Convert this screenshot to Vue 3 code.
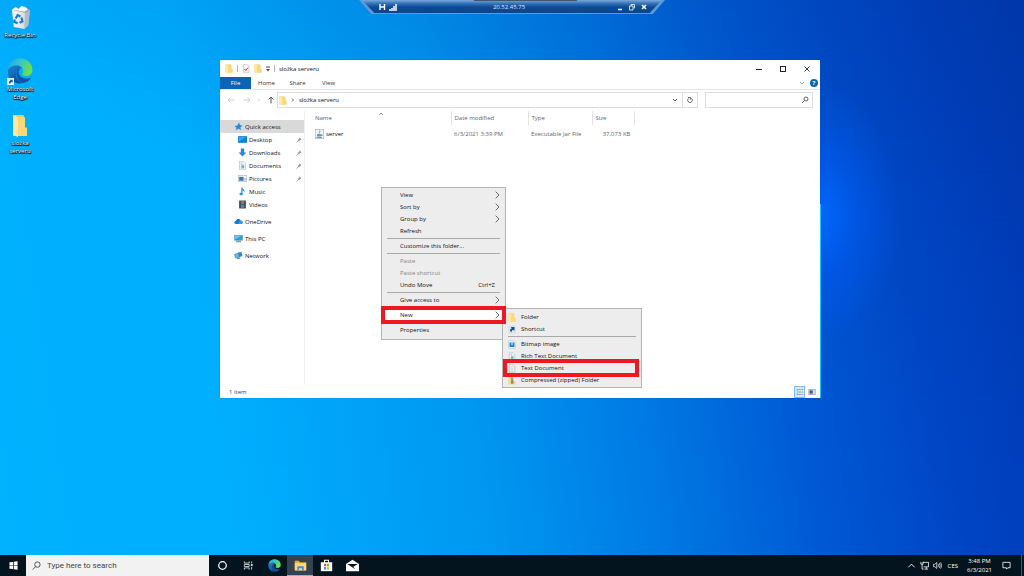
<script setup>
const desktopIcons = [
  { icon: 'bin', label: 'Recycle Bin' },
  { icon: 'edge', label: 'Microsoft Edge', shortcut: true },
  { icon: 'folder', label: 'složka serveru' }
]

const tabs = ['File', 'Home', 'Share', 'View']

const places = [
  { icon: 'star', label: 'Quick access', root: true, active: true },
  { icon: 'desktop', label: 'Desktop', pinned: true },
  { icon: 'download', label: 'Downloads', pinned: true },
  { icon: 'document', label: 'Documents', pinned: true },
  { icon: 'picture', label: 'Pictures', pinned: true },
  { icon: 'music', label: 'Music' },
  { icon: 'video', label: 'Videos' },
  { icon: 'cloud', label: 'OneDrive', root: true },
  { icon: 'pc', label: 'This PC', root: true },
  { icon: 'network', label: 'Network', root: true }
]

const menu = [
  { label: 'View', arrow: true },
  { label: 'Sort by', arrow: true },
  { label: 'Group by', arrow: true },
  { label: 'Refresh' },
  { sep: true },
  { label: 'Customize this folder...' },
  { sep: true },
  { label: 'Paste', disabled: true },
  { label: 'Paste shortcut', disabled: true },
  { label: 'Undo Move', keys: 'Ctrl+Z' },
  { sep: true },
  { label: 'Give access to', arrow: true },
  { sep: true },
  { label: 'New', arrow: true, open: true },
  { sep: true },
  { label: 'Properties' }
]

const newItems = [
  { label: 'Folder', icon: 'folder' },
  { label: 'Shortcut', icon: 'shortcut' },
  { sep: true },
  { label: 'Bitmap image', icon: 'bitmap' },
  { label: 'Rich Text Document', icon: 'document' },
  { label: 'Text Document', icon: 'text', marked: true },
  { label: 'Compressed (zipped) Folder', icon: 'zip' }
]

const apps = [
  { icon: 'cortana', label: 'Cortana' },
  { icon: 'taskview', label: 'Task View' },
  { icon: 'edge', label: 'Microsoft Edge' },
  { icon: 'explorer', label: 'File Explorer', active: true },
  { icon: 'store', label: 'Microsoft Store' },
  { icon: 'mail', label: 'Mail' }
]
</script>

<template>
  <svg class="sprite" aria-hidden="true">
    <defs>
      <linearGradient id="edge-top" x1="0" y1="0" x2="1" y2="0.3">
        <stop offset="0" stop-color="#2aa5dc" />
        <stop offset="0.5" stop-color="#33c3cf" />
        <stop offset="1" stop-color="#6be04a" />
      </linearGradient>
      <linearGradient id="edge-low" x1="0" y1="0" x2="0.6" y2="1">
        <stop offset="0" stop-color="#1b86d8" />
        <stop offset="1" stop-color="#0c4a9c" />
      </linearGradient>
      <linearGradient id="bin-side" x1="0" y1="0" x2="1" y2="0">
        <stop offset="0" stop-color="#f4f6f8" />
        <stop offset="0.6" stop-color="#dfe3e7" />
        <stop offset="1" stop-color="#aab2ba" />
      </linearGradient>
    </defs>
    <symbol id="bin" viewBox="0 0 24 24">
      <path d="M3 4 L5 22 L16 24 L20 20 L22 4 Z" fill="url(#bin-side)" />
      <path d="M16 24 L20 20 L22 4 L17 6 Z" fill="#b5bcc4" />
      <path d="M3 4 L8 2 L12 1 L17 1 L22 4 L17 7 Z" fill="#8f989f" />
      <path d="M3 4 L7 1 L10 3 L13 0 L17 1 L20 4 L16 6 L10 5 Z" fill="#f7f9fa" />
      <path d="M7 13 L9 9.500 L12 11 M13 12 L14 16 L11 17.500 M9 18 L5.500 16.500 L6 14" fill="none" stroke="#1479d2" stroke-width="2.200" />
    </symbol>
    <symbol id="edge" viewBox="0 0 26 26">
      <path d="M1 12 C1 5 6.500 0.500 13 0.500 C20.500 0.500 25.500 6 25.500 12 C25.500 16 22.500 18 19 18 C15.500 18 14.500 16.500 15.500 15 C17.500 12 15 7.500 10 7.500 C5.500 7.500 2 10 1 12 Z" fill="url(#edge-top)" />
      <path d="M1 12 C2 9 6 7.500 9.500 7.500 C12.500 7.500 14.500 9 15 10.500 C12 9.500 9 12 9 16 C9 20.500 12 24.500 16 25 C7 27 0 21 1 12 Z" fill="url(#edge-low)" />
      <path d="M9.500 14 C8.500 19 12 24.500 16 25 C20 24.500 23 22 24.500 19.500 C21.500 21.500 12 21.500 11.500 14 C11.500 12.500 12.500 11 14 10.500 C11.500 10 10 12 9.500 14 Z" fill="#15529f" />
    </symbol>
    <symbol id="folder" viewBox="0 0 16 22" preserveAspectRatio="none">
      <path d="M1 1 H11 L12 2 V13 H15 V21 H1 Z" fill="#f2c95c" />
      <path d="M1 1 L6 3 V22 L1 20 Z" fill="#ffe9a6" />
      <path d="M6 3 H13 V13 L15 14 V21 H6 Z" fill="#fbd978" />
    </symbol>
    <symbol id="check" viewBox="0 0 16 16">
      <path d="M2.500 0.500 H11 L14 3.500 V15.500 H2.500 Z" fill="#fff" stroke="#999" />
      <path d="M5 9 L7.500 12 L12 6" fill="none" stroke="#d5333e" stroke-width="2" />
    </symbol>
    <symbol id="star" viewBox="0 0 16 16">
      <path d="M9 1 L10.500 5.500 L15 6.500 L11.500 9.500 L12 14.500 L8 11.500 L3 15 L4.500 10 L1 7 L6 6 Z" fill="#2389dc" />
    </symbol>
    <symbol id="desktop" viewBox="0 0 16 16">
      <rect y="2" width="16" height="12" fill="#0f83d8" />
      <path d="M1 3 H15 L1 12 Z" fill="#2fa6f0" />
    </symbol>
    <symbol id="download" viewBox="0 0 16 16">
      <path d="M5 1 H11 V8 H15 L8 15 L1 8 H5 Z" fill="#3285cf" />
    </symbol>
    <symbol id="document" viewBox="0 0 16 16">
      <path d="M2.500 0.500 H10 L13.500 4 V15.500 H2.500 Z" fill="#f5f9fb" stroke="#9badb8" />
      <path d="M5 4 H8 M5 7 H11 M5 12.500 H11" stroke="#6d9cba" />
      <rect x="6" y="8" width="5" height="4" fill="#62a8d5" />
    </symbol>
    <symbol id="picture" viewBox="0 0 16 16">
      <rect x="0.500" y="2.500" width="15" height="11" fill="#fff" stroke="#9aaab4" />
      <path d="M2 5 H10 V12 H2 Z" fill="#3e79a9" />
      <path d="M10 7 H14 V12 H10 Z" fill="#a6cee8" />
    </symbol>
    <symbol id="music" viewBox="0 0 16 16">
      <path d="M7 1 V12" stroke="#1683d8" stroke-width="2" />
      <path d="M8 1 C8 4 13 5 11 10 C11 7 9 6 8 6 Z" fill="#1683d8" />
      <ellipse cx="5.500" cy="12.500" rx="3" ry="2.500" fill="#2593e2" />
    </symbol>
    <symbol id="video" viewBox="0 0 16 16">
      <rect x="2" y="1" width="12" height="14" fill="#303840" />
      <rect x="5" y="2" width="6" height="5" fill="#8c7b6a" />
      <rect x="5" y="8" width="6" height="6" fill="#5486b8" />
      <path d="M3.500 2 V15 M12.500 2 V15" stroke="#c7cfd5" stroke-dasharray="1 2" />
    </symbol>
    <symbol id="cloud" viewBox="0 0 18 16">
      <path d="M4 13 C-1 13 0 7 4 7 C5 2 11 2 13 6 C18 6 19 13 14 13 Z" fill="#1277c9" />
      <path d="M7 13 L10 8 C12 6 18 6 17 11 C17 13 15 13 14 13 Z" fill="#249ee8" />
    </symbol>
    <symbol id="pc" viewBox="0 0 18 16">
      <rect x="1" y="1.500" width="16" height="10" fill="#2c9be2" stroke="#5d8fb0" />
      <path d="M2 2 H16 L2 10 Z" fill="#6cc4f5" />
      <path d="M9 12 V14 M4 14.500 H14" stroke="#6f8896" stroke-width="2" />
    </symbol>
    <symbol id="network" viewBox="0 0 18 16">
      <path d="M8 2 L15 1 L17 9 L9 12 Z" fill="#3289c7" />
      <path d="M1 6 L9 3 L11 11 L3 13 Z" fill="#64b6e8" stroke="#2376ad" />
      <path d="M5 13 L12 12 L13 14 L7 15 Z" fill="#4e788f" />
    </symbol>
    <symbol id="pin" viewBox="0 0 12 12">
      <path d="M7 1 L11 5 L8 6 L6 9 L3 6 L6 4 Z" fill="#8a9298" />
      <path d="M4.500 7.500 L1 11" stroke="#8a9298" stroke-width="1.500" />
    </symbol>
    <symbol id="jar" viewBox="0 0 18 20">
      <rect x="0.500" y="0.500" width="17" height="19" fill="#eef3f6" stroke="#8fa2b0" />
      <path d="M9 3 C12 5 7 7 9 9" fill="none" stroke="#db7b32" stroke-width="2" />
      <path d="M4 10 H12 V15 H4 Z M12 11 H15 V14 H12" fill="#7797af" />
      <path d="M3 17 H14" stroke="#59798f" stroke-width="1.500" />
    </symbol>
    <symbol id="shortcut" viewBox="0 0 16 16">
      <rect x="2" y="1" width="12" height="14" fill="#e5edf3" stroke="#c0ccd5" />
      <path d="M5 3 H13 V11 L10.500 8.500 C7.500 9.500 7 11 7 14 C2 10 4.500 6 8 6 Z" fill="#164b85" />
    </symbol>
    <symbol id="bitmap" viewBox="0 0 16 16">
      <path d="M1.500 0.500 H11 L14.500 4 V15.500 H1.500 Z" fill="#fff" stroke="#9ab0bf" />
      <rect x="3" y="4" width="10" height="9" fill="#1c85cf" />
      <circle cx="8" cy="7" r="2" fill="#b6e1f9" />
    </symbol>
    <symbol id="text" viewBox="0 0 16 16">
      <path d="M2.500 0.500 H11 L13.500 3 V15.500 H2.500 Z" fill="#fafafa" stroke="#9c9c9c" />
      <path d="M5 4.500 H11 M5 7.500 H11 M5 10.500 H11 M5 13 H11" stroke="#ababab" />
    </symbol>
    <symbol id="zip" viewBox="0 0 16 22" preserveAspectRatio="none">
      <path d="M1 1 H12 V12 H15 V21 H1 Z" fill="#fbd978" />
      <path d="M8 1 V14" stroke="#77705f" stroke-width="3" stroke-dasharray="2 1" />
      <rect x="6" y="12" width="5" height="7" fill="#8c8c86" />
    </symbol>
    <symbol id="chevron" viewBox="0 0 8 12">
      <path d="M2 1 L7 6 L2 11" fill="none" stroke="currentColor" stroke-width="1.300" />
    </symbol>
    <symbol id="cortana" viewBox="0 0 16 16">
      <circle cx="8" cy="8" r="5.500" fill="none" stroke="#fff" stroke-width="1.800" />
    </symbol>
    <symbol id="taskview" viewBox="0 0 16 16">
      <path d="M2 2 V4.500 H9 V2 M2 14 V11.500 H9 V14 M2 6.500 H9 V9.500 H2 Z M12.500 2 V5 M12.500 10 V14" fill="none" stroke="#dfe3e6" stroke-width="1.200" />
      <rect x="11.500" y="6" width="2.500" height="2.500" fill="#fff" />
    </symbol>
    <symbol id="explorer" viewBox="0 0 16 16">
      <path d="M1 2 H6 L7 4 H15 V14 H1 Z" fill="#e8ae35" />
      <path d="M1 5 H15 V14 H1 Z" fill="#ffd978" />
      <path d="M4 14 V9 H12 V14 H10 V11.500 H6 V14 Z" fill="#3c8edb" />
    </symbol>
    <symbol id="store" viewBox="0 0 16 16">
      <path d="M5.500 5 V1.500 H10.500 V5" fill="none" stroke="#fff" stroke-width="1.300" />
      <path d="M1 4 H15 V15 H1 Z" fill="#fff" />
      <rect x="5" y="6" width="2.600" height="3" fill="#e8502d" />
      <rect x="8.500" y="6" width="2.600" height="3" fill="#76b82a" />
      <rect x="5" y="10" width="2.600" height="3" fill="#1e9ee5" />
      <rect x="8.500" y="10" width="2.600" height="3" fill="#f5b400" />
    </symbol>
    <symbol id="mail" viewBox="0 0 16 16">
      <path d="M0 6 L8 1 L16 6 V15 H0 Z" fill="#fff" />
      <path d="M1.500 6 H14.500 L9 9.500 L11.500 12.500 Z" fill="#04141f" />
    </symbol>
  </svg>

  <div class="screen">
    <main class="desktop">
      <nav class="shortcuts" aria-label="Desktop">
        <a v-for="d in desktopIcons" :key="d.label" href="#" class="shortcut">
          <span class="shortcut-pic">
            <svg class="big" :class="d.icon"><use :href="'#' + d.icon" /></svg>
            <svg v-if="d.shortcut" class="badge" viewBox="0 0 8 8">
              <rect width="8" height="8" fill="#f4f8fb" />
              <path d="M3 2 H6.500 V5.500 L5.500 4.500 C4 5 3.500 6 3.500 7 C1 5 2.500 3 4 3 Z" fill="#1a5aa8" />
            </svg>
          </span>
          <span class="shortcut-label">{{ d.label }}</span>
        </a>
      </nav>

      <header class="remote">
        <div class="remote-inner">
          <svg class="remote-left" viewBox="0 0 20 10">
            <path d="M2 2 V8 M6.500 2 V8 M2 5 H7" fill="none" stroke="#fff" stroke-width="1.400" />
            <path d="M12 9 V7 M14 9 V6 M16 9 V4 M18 9 V2" stroke="#fff" stroke-width="1.500" />
          </svg>
          <span class="remote-ip">20.52.45.75</span>
          <div class="remote-buttons">
            <button aria-label="Minimize"><svg viewBox="0 0 8 8"><path d="M2 6.500 H6" stroke="#fff" stroke-width="1.400" /></svg></button>
            <button aria-label="Restore"><svg viewBox="0 0 8 8"><path d="M3 3 V1.500 H6.500 V5 H5.500 M1.500 3 H5 V7 H1.500 Z" fill="none" stroke="#e4eefb" stroke-width="0.900" /></svg></button>
            <button aria-label="Close"><svg viewBox="0 0 8 8"><path d="M2 2 L6 6 M6 2 L2 6" stroke="#fff" stroke-width="1.500" /></svg></button>
          </div>
        </div>
      </header>

      <section class="window" aria-label="složka serveru">
        <header class="titlebar">
          <svg class="ic"><use href="#folder" /></svg>
          <i class="bar"></i>
          <svg class="ic"><use href="#check" /></svg>
          <svg class="ic"><use href="#folder" /></svg>
          <svg class="mini" viewBox="0 0 6 8"><path d="M1 2 H5" stroke="#444" /><path d="M1 4 H5 L3 6.500 Z" fill="#444" /></svg>
          <i class="bar"></i>
          <h1>složka serveru</h1>
          <div class="window-buttons">
            <button aria-label="Minimize"><svg viewBox="0 0 8 8"><path d="M1 4.500 H7" stroke="#222" /></svg></button>
            <button aria-label="Maximize"><svg viewBox="0 0 8 8"><rect x="1.500" y="1.500" width="5" height="5" fill="none" stroke="#222" /></svg></button>
            <button aria-label="Close"><svg viewBox="0 0 8 8"><path d="M1.500 1.500 L6.500 6.500 M6.500 1.500 L1.500 6.500" stroke="#222" stroke-width="0.900" /></svg></button>
          </div>
        </header>

        <div class="ribbon">
          <button v-for="t in tabs" :key="t" class="tab" :class="{ file: t === 'File' }">{{ t }}</button>
          <svg class="expand" viewBox="0 0 8 8"><path d="M2 3 L4 5 L6 3" fill="none" stroke="#8a8a8a" stroke-width="0.800" /></svg>
          <button class="help" aria-label="Help">?</button>
        </div>

        <div class="address-row">
          <div class="arrows">
            <button class="back" aria-label="Back"><svg viewBox="0 0 8 8"><path d="M7.500 4 H1 M3.500 1.500 L1 4 L3.500 6.500" fill="none" stroke="#c3c3c3" stroke-width="0.800" /></svg></button>
            <button aria-label="Forward"><svg viewBox="0 0 8 8"><path d="M0.500 4 H7 M4.500 1.500 L7 4 L4.500 6.500" fill="none" stroke="#c3c3c3" stroke-width="0.800" /></svg></button>
            <button aria-label="Recent"><svg viewBox="0 0 8 8"><path d="M3 3.500 L4 4.500 L5 3.500" fill="none" stroke="#aaa" stroke-width="0.800" /></svg></button>
            <button aria-label="Up"><svg viewBox="0 0 8 8"><path d="M4 7.500 V1 M1.500 3.500 L4 1 L6.500 3.500" fill="none" stroke="#444" stroke-width="0.900" /></svg></button>
          </div>
          <div class="address">
            <svg class="ic"><use href="#folder" /></svg>
            <svg class="crumb" viewBox="0 0 4 6"><path d="M1 1.500 L2.500 3 L1 4.500" fill="none" stroke="#444" stroke-width="0.800" /></svg>
            <span>složka serveru</span>
            <button class="drop" aria-label="Previous locations"><svg viewBox="0 0 8 8"><path d="M2 3 L4 5 L6 3" fill="none" stroke="#555" /></svg></button>
            <button class="reload" aria-label="Refresh"><svg viewBox="0 0 8 8"><path d="M5.500 2.500 A2.300 2.300 0 1 1 2.500 2.500 M2 1.500 H4.500 V3.500" fill="none" stroke="#555" stroke-width="0.900" /></svg></button>
          </div>
          <div class="find">
            <input type="text" aria-label="Search folder" />
            <svg viewBox="0 0 8 8"><circle cx="5" cy="3" r="2" fill="none" stroke="#555" stroke-width="0.900" /><path d="M3.500 4.500 L1 7" stroke="#555" stroke-width="0.900" /></svg>
          </div>
        </div>

        <div class="body">
          <nav class="places" aria-label="Places">
            <a v-for="p in places" :key="p.label" href="#" class="place" :class="{ root: p.root, active: p.active }">
              <svg class="ic"><use :href="'#' + p.icon" /></svg>
              <span>{{ p.label }}</span>
              <svg v-if="p.pinned" class="pin"><use href="#pin" /></svg>
            </a>
          </nav>
          <div class="files">
            <svg class="sorted" viewBox="0 0 6 4"><path d="M1 3 L3 1 L5 3" fill="none" stroke="#777" stroke-width="0.800" /></svg>
            <table>
              <thead>
                <tr>
                  <th class="c-name">Name</th>
                  <th class="c-date">Date modified</th>
                  <th class="c-type">Type</th>
                  <th class="c-size">Size</th>
                </tr>
              </thead>
              <tbody>
                <tr>
                  <td class="c-name"><span class="file-name"><svg class="ic jar"><use href="#jar" /></svg>server</span></td>
                  <td>6/3/2021 3:39 PM</td>
                  <td>Executable Jar File</td>
                  <td class="c-size">37,073 KB</td>
                </tr>
              </tbody>
            </table>
          </div>
        </div>

        <footer class="status">
          <span>1 item</span>
          <div class="modes">
            <button class="on" aria-label="Details"><svg viewBox="0 0 10 10"><path d="M1 2 H3 M1 5 H3 M1 8 H3" stroke="#5a8db4" stroke-width="1.500" /><path d="M4 2 H6 M7 2 H9 M4 5 H6 M7 5 H9 M4 8 H6 M7 8 H9" stroke="#777" /></svg></button>
            <button aria-label="Large icons"><svg viewBox="0 0 10 10"><rect x="1" y="2" width="8" height="6" fill="#dfe5ea" stroke="#9aa5ad" /><path d="M2 3 H6 V7 H2 Z" fill="#3b5f80" /></svg></button>
          </div>
        </footer>
      </section>

      <ul class="menu context">
        <li v-for="(m, i) in menu" :key="i" :class="{ sep: m.sep, open: m.open }">
          <template v-if="!m.sep">
            <button :disabled="m.disabled">
              <span>{{ m.label }}</span>
              <span v-if="m.keys" class="keys">{{ m.keys }}</span>
              <svg v-if="m.arrow" class="arrow"><use href="#chevron" /></svg>
            </button>
            <ul v-if="m.open" class="menu sub">
              <li v-for="(n, j) in newItems" :key="j" :class="{ sep: n.sep, marked: n.marked }">
                <button v-if="!n.sep">
                  <svg class="ic"><use :href="'#' + n.icon" /></svg>
                  <span>{{ n.label }}</span>
                </button>
              </li>
            </ul>
          </template>
        </li>
      </ul>
    </main>

    <footer class="taskbar">
      <button class="start" aria-label="Start">
        <svg viewBox="0 0 10 10"><path d="M0.500 1.500 L4.500 1 V4.700 H0.500 Z M5.300 0.900 L9.500 0.300 V4.700 H5.300 Z M0.500 5.400 H4.500 V9 L0.500 8.500 Z M5.300 5.400 H9.500 V9.700 L5.300 9.100 Z" fill="#fff" /></svg>
      </button>
      <label class="search">
        <svg viewBox="0 0 10 10"><circle cx="6" cy="4" r="3" fill="none" stroke="#333" stroke-width="0.900" /><path d="M4 6.200 L0.800 9.500" stroke="#333" stroke-width="0.900" /></svg>
        <input type="text" placeholder="Type here to search" aria-label="Type here to search" />
      </label>
      <button v-for="a in apps" :key="a.icon" class="app" :class="[a.icon, { active: a.active }]" :aria-label="a.label">
        <svg><use :href="'#' + a.icon" /></svg>
      </button>
      <div class="tray">
        <svg viewBox="0 0 10 10"><path d="M1.500 7 L5 3.500 L8.500 7" fill="none" stroke="#fff" /></svg>
        <svg viewBox="0 0 10 10"><path d="M3 1.500 H9.500 V6.500 H4 M5 9 H9 M7 6.500 V9 M1 1 V3.500 H3.500 V1 M2.300 3.500 V9 H4" fill="none" stroke="#fff" stroke-width="0.900" /></svg>
        <svg viewBox="0 0 10 10"><path d="M0.500 3.700 H2 L4.200 1.700 V8.300 L2 6.300 H0.500 Z M5.700 3.500 Q6.700 5 5.700 6.500 M7 2.300 Q9 5 7 7.700 M8.500 1.500 Q10.700 5 8.500 8.500" fill="none" stroke="#fff" stroke-width="0.800" /></svg>
        <span class="lang">CES</span>
        <time class="clock"><span>3:48 PM</span><span>6/3/2021</span></time>
        <svg class="notes" viewBox="0 0 10 10"><path d="M1 1.500 H9 V7.500 H6.500 L5 9 V7.500 H1 Z" fill="none" stroke="#fff" stroke-width="0.900" /></svg>
        <button class="peek" aria-label="Show desktop"></button>
      </div>
    </footer>
  </div>
</template>

<style>
body {
  margin: 0;
}
</style>

<style scoped>
.sprite {
  position: absolute;
  width: 0;
  height: 0;
}
.screen {
  display: flex;
  flex-direction: column;
  height: 100vh;
  overflow: hidden;
  font-family: "Open Sans", "Noto Sans", sans-serif;
  font-size: 6px;
  line-height: 8px;
  color: #111;
}
button,
input {
  margin: 0;
  padding: 0;
  border: 0;
  background: none;
  font: inherit;
  color: inherit;
}
button {
  display: flex;
  align-items: center;
  white-space: nowrap;
}
a {
  color: inherit;
  text-decoration: none;
}
svg {
  display: block;
  flex: none;
}
.ic {
  width: 8px;
  height: 9px;
}
.desktop {
  position: relative;
  flex: 1;
  min-height: 0;
  background:
    radial-gradient(ellipse 80px 130px at 822px 215px, rgba(0, 105, 255, 0.9), rgba(0, 95, 255, 0.45) 45%, rgba(0, 80, 240, 0) 100%),
    linear-gradient(200deg, rgba(0, 50, 150, 0.3) 0, rgba(0, 60, 170, 0.12) 30%, rgba(0, 80, 200, 0) 50%),
    linear-gradient(82deg, #00b2ff 0, #00aefe 22%, #0097f0 45%, #007ae4 60%, #0058d4 75%, #0044c4 88%, #0038b2 100%);
}

.shortcuts {
  display: flex;
  flex-direction: column;
  width: 40px;
  padding-top: 3px;
}
.shortcut {
  display: flex;
  flex-direction: column;
  align-items: center;
  height: 54px;
  color: #fff;
  text-align: center;
  text-shadow: 0 0 1px #000, 0 1px 1px #000, 1px 1px 1px #000;
}
.shortcut-pic {
  position: relative;
  display: flex;
  align-items: center;
  justify-content: center;
  width: 28px;
  height: 28px;
}
.shortcut-label {
  width: 36px;
}
.big {
  width: 26px;
  height: 26px;
}
.big.bin {
  width: 23px;
  height: 23px;
}
.big.folder {
  width: 16px;
  height: 23px;
}
.badge {
  position: absolute;
  left: 1px;
  bottom: 0;
  width: 7px;
  height: 7px;
}

.remote {
  position: absolute;
  top: 0;
  left: 50%;
  width: 306px;
  height: 14px;
  transform: translateX(-50%);
  background: #5d9bd8;
  clip-path: polygon(0 0, 100% 0, 96% 100%, 4% 100%);
}
.remote-inner {
  display: flex;
  align-items: center;
  height: 13px;
  box-sizing: border-box;
  padding: 0 17px 0 19px;
  background:
    linear-gradient(#45556b, #45556b) 115px 0 / 103px 1px no-repeat,
    linear-gradient(#79a9dc 0, #2f6db5 30%, #0c4b98 55%, #08458f 100%);
  clip-path: polygon(1% 0, 99% 0, 95% 100%, 5% 100%);
}
.remote-left {
  width: 20px;
  height: 10px;
}
.remote-ip {
  flex: 1;
  padding-left: 4px;
  text-align: center;
  color: #dbe9fa;
}
.remote-buttons {
  display: flex;
  gap: 4px;
}
.remote-buttons svg {
  width: 8px;
  height: 8px;
}

.window {
  position: absolute;
  top: 60px;
  left: 220px;
  display: flex;
  flex-direction: column;
  width: 600px;
  height: 338px;
  background: #fff;
  box-shadow: 0 0 1px rgba(0, 80, 160, 0.6);
}
.window::after {
  content: "";
  position: absolute;
  top: 144px;
  right: -1px;
  bottom: 0;
  width: 1px;
  background: #22c3fa;
}
.titlebar {
  display: flex;
  align-items: center;
  height: 17px;
  padding: 0 1px 0 5px;
}
.bar {
  width: 1px;
  height: 7px;
  margin: 0 4px;
  background: #b5b5b5;
}
.titlebar .ic + .ic {
  margin-left: 4px;
}
.mini {
  width: 6px;
  height: 8px;
  margin-left: 3px;
}
.titlebar .mini + .bar {
  margin: 0 4px 0 3px;
}
h1 {
  margin: 0;
  font-size: 6px;
  font-weight: 400;
}
.window-buttons {
  display: flex;
  margin-left: auto;
}
.window-buttons button {
  justify-content: center;
  width: 24px;
  height: 16px;
}
.window-buttons svg {
  width: 8px;
  height: 8px;
}
.ribbon {
  display: flex;
  align-items: center;
  height: 12px;
  padding-right: 2px;
  border-bottom: 1px solid #e4e4e4;
  color: #333;
}
.tab {
  justify-content: center;
  height: 12px;
  padding: 0 7px;
  min-width: 31px;
}
.file {
  background: #0a63b4;
  color: #fff;
}
.expand {
  width: 8px;
  height: 8px;
  margin-left: auto;
}
.help {
  justify-content: center;
  width: 8px;
  height: 8px;
  margin-left: 4px;
  border-radius: 50%;
  background: #0a63b4;
  color: #fff;
  font-weight: 700;
}
.address-row {
  display: flex;
  padding: 2px 7px 3px;
}
.arrows {
  display: flex;
  align-items: center;
  gap: 4px;
  margin-right: 2px;
}
.back {
  margin-right: 4px;
}
.arrows svg {
  width: 8px;
  height: 8px;
}
.address {
  display: flex;
  flex: 1;
  align-items: center;
  height: 14px;
  border: 1px solid #dedede;
}
.address .ic {
  margin-left: 1px;
}
.crumb {
  width: 4px;
  height: 6px;
  margin: 0 4px;
}
.drop {
  margin-left: auto;
}
.drop,
.reload {
  justify-content: center;
  width: 15px;
  height: 14px;
}
.reload {
  border-left: 1px solid #dedede;
}
.drop svg,
.reload svg {
  width: 8px;
  height: 8px;
}
.find {
  display: flex;
  align-items: center;
  width: 106px;
  height: 14px;
  margin-left: 7px;
  border: 1px solid #dedede;
}
.find input {
  flex: 1;
  min-width: 0;
}
.find svg {
  width: 8px;
  height: 8px;
  margin-right: 3px;
}

.body {
  display: flex;
  flex: 1;
  min-height: 0;
}
.places {
  width: 84px;
  padding-top: 9px;
  border-right: 1px solid #f0f0f0;
}
.place {
  display: flex;
  align-items: center;
  gap: 2px;
  height: 13px;
  padding: 0 2px 0 18px;
}
.place.root {
  margin-top: 4px;
  padding-left: 14px;
}
.place.active {
  margin-top: 0;
  background: #d9d9d9;
}
.place .ic {
  width: 9px;
  height: 9px;
}
.place .pin {
  width: 6px;
  height: 6px;
  margin-left: auto;
}
.files {
  position: relative;
  flex: 1;
}
.sorted {
  position: absolute;
  top: 1px;
  left: 73px;
  width: 6px;
  height: 4px;
}
table {
  border-collapse: collapse;
  table-layout: fixed;
  width: 330px;
}
th,
td {
  box-sizing: border-box;
  padding: 0 0 0 3px;
  text-align: left;
  font-weight: 400;
  color: #5f5f5f;
  white-space: nowrap;
}
th {
  height: 14px;
  border-right: 1px solid #e3e3e3;
  color: #4f6580;
}
td {
  height: 18px;
}
.c-name {
  width: 146px;
  padding-left: 10px;
}
.c-date {
  width: 77px;
}
.c-type {
  width: 64px;
}
td.c-size {
  padding-right: 4px;
  text-align: right;
}
.file-name {
  display: flex;
  align-items: center;
  gap: 2px;
  color: #111;
}
.jar {
  width: 9px;
  height: 10px;
}
.status {
  display: flex;
  align-items: center;
  justify-content: space-between;
  height: 13px;
  padding: 0 3px 0 9px;
  color: #26435f;
}
.modes {
  display: flex;
  gap: 1px;
}
.modes button {
  justify-content: center;
  width: 11px;
  height: 12px;
}
.modes .on {
  box-sizing: border-box;
  border: 1px solid #7dbce4;
  background: #d3ecfb;
}
.modes svg {
  width: 8px;
  height: 8px;
}

.menu {
  position: absolute;
  margin: 0;
  box-sizing: border-box;
  border: 1px solid #b4b4b4;
  background: #ededed;
  list-style: none;
}
.context {
  top: 187px;
  left: 381px;
  width: 125px;
  padding: 1px 3px 3px;
}
.menu li {
  position: relative;
  height: 12px;
}
.menu li.sep {
  display: flex;
  align-items: center;
  height: 3px;
}
.menu li.sep::before {
  content: "";
  flex: 1;
  height: 1px;
  margin: 0 2px;
  background: #a9a9a9;
}
.menu button {
  width: 100%;
  height: 12px;
  padding-left: 15px;
}
.menu button:disabled {
  color: #858585;
}
.keys {
  margin-left: auto;
  padding-right: 7px;
}
.arrow {
  width: 6px;
  height: 8px;
  margin-left: auto;
  margin-right: 2px;
  color: #555;
}
.menu li.open > button {
  background: #fff;
}
.menu li.open::after,
.menu li.marked::after {
  content: "";
  position: absolute;
  z-index: 2;
  inset: -3px -4px;
  border: 4px solid #ee1822;
  pointer-events: none;
}
.menu.sub {
  z-index: 1;
  top: -1px;
  left: 117px;
  width: 140px;
  padding: 2px 3px 1px;
}
.menu.sub button {
  gap: 5px;
  padding-left: 2px;
}
.menu li.marked::after {
  inset: -3px -1px -3px -3px;
}

.taskbar {
  display: flex;
  align-items: center;
  height: 21px;
  background: #04141f;
  color: #fff;
}
.start {
  justify-content: center;
  width: 26px;
  height: 21px;
}
.start svg {
  width: 9px;
  height: 9px;
}
.search {
  display: flex;
  align-items: center;
  gap: 6px;
  width: 177px;
  height: 21px;
  padding-left: 6px;
  background: #f2f2f2;
  color: #444;
}
.search svg {
  width: 9px;
  height: 9px;
}
.search input {
  flex: 1;
  min-width: 0;
  font-family: Roboto, "Open Sans", sans-serif;
  font-size: 8px;
  line-height: 12px;
}
.search input::placeholder {
  color: #444;
  opacity: 1;
}
.app {
  justify-content: center;
  width: 26px;
  height: 21px;
}
.app svg {
  width: 13px;
  height: 13px;
}
.app.cortana svg,
.app.taskview svg {
  width: 11px;
  height: 11px;
}
.app.active {
  box-sizing: border-box;
  border-bottom: 1px solid #76b9ed;
  background: #36434f;
}
.tray {
  display: flex;
  align-items: center;
  gap: 4px;
  margin-left: auto;
  padding-right: 1px;
}
.tray svg {
  width: 9px;
  height: 9px;
}
.lang {
  margin: 0 5px 0 2px;
}
.clock {
  display: flex;
  flex-direction: column;
  align-items: center;
  line-height: 9px;
}
.tray .notes {
  margin-left: 6px;
}
.peek {
  width: 2px;
  height: 21px;
  margin-left: 6px;
  border-left: 1px solid #4a5660;
}
</style>
